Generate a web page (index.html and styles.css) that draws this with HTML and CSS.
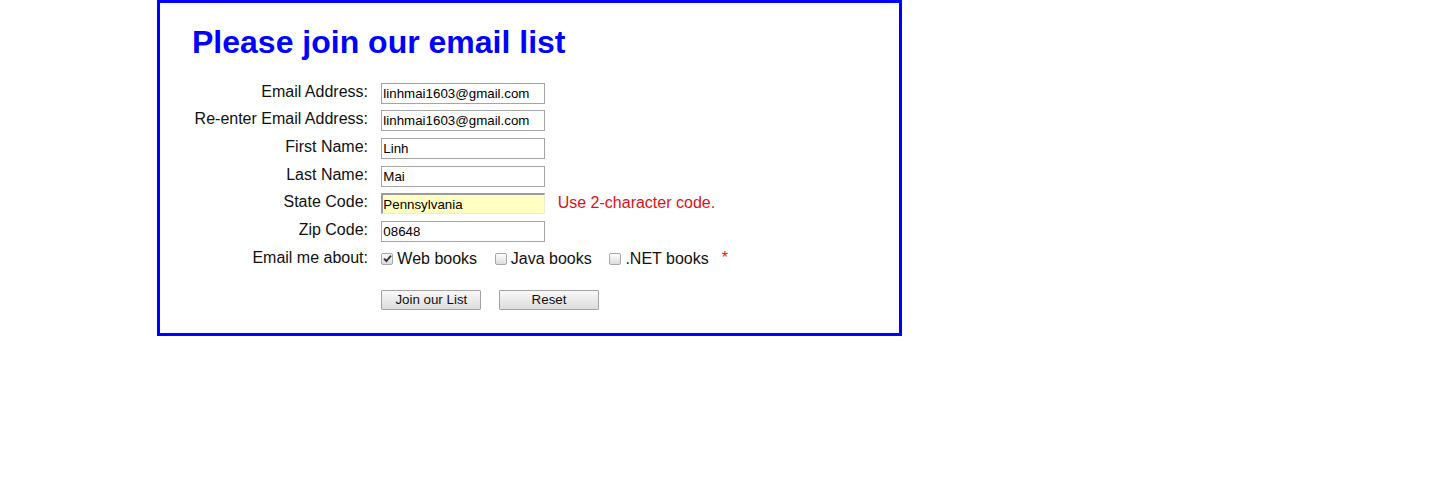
FILE: index.html
```html
<!DOCTYPE html>
<html>
<head>
<meta charset="utf-8">
<title>Email List</title>
<link rel="stylesheet" href="styles.css">
</head>
<body>
<main class="box">
  <h1 class="title">Please join our email list</h1>
  <form class="form">
    <div class="row"><label class="lbl">Email Address:</label><input class="field" type="text" value="linhmai1603@gmail.com"></div>
    <div class="row"><label class="lbl">Re-enter Email Address:</label><input class="field" type="text" value="linhmai1603@gmail.com"></div>
    <div class="row"><label class="lbl">First Name:</label><input class="field" type="text" value="Linh"></div>
    <div class="row"><label class="lbl">Last Name:</label><input class="field" type="text" value="Mai"></div>
    <div class="row"><label class="lbl">State Code:</label><input class="field field-auto" type="text" value="Pennsylvania"><span class="err">Use 2-character code.</span></div>
    <div class="row"><label class="lbl">Zip Code:</label><input class="field" type="text" value="08648"></div>
    <div class="row row-checks">
      <label class="lbl">Email me about:</label>
      <span class="check-item">
        <span class="cb cb-on"><svg width="9" height="9" viewBox="0 0 9 9"><path d="M1 4.6 L3.4 7 L8 1.6" fill="none" stroke="#333" stroke-width="1.9"/></svg></span><span class="ctext">Web books</span>
      </span>
      <span class="check-item">
        <span class="cb"></span><span class="ctext">Java books</span>
      </span>
      <span class="check-item">
        <span class="cb"></span><span class="ctext">.NET books</span>
      </span>
      <span class="star">*</span>
    </div>
    <div class="row row-buttons">
      <button class="btn" type="button">Join our List</button>
      <button class="btn" type="button">Reset</button>
    </div>
  </form>
</main>
</body>
</html>
```
FILE: styles.css
```css
html, body {
  margin: 0;
  padding: 0;
  background: #fff;
}
body {
  font-family: "Liberation Sans", Arial, sans-serif;
  font-size: 16px;
  color: #111;
}
.box {
  box-sizing: border-box;
  width: 745px;
  margin-left: 157px;
  border: 3px solid #0000ff;
  padding: 0 32px 17px 32px;
}
.title {
  color: #0000ff;
  font-size: 32px;
  font-weight: bold;
  line-height: 36.8px;
  margin: 21.44px 0 21.44px 0;
}
.form {
  display: flex;
  flex-direction: column;
}
.row {
  display: flex;
  align-items: flex-start;
  height: 27.67px;
}
.lbl {
  width: 176px;
  flex: none;
  text-align: right;
  line-height: 18.4px;
}
.field {
  box-sizing: border-box;
  width: 164px;
  height: 21px;
  margin: 0 0 0 13.33px;
  padding: 1px 2px 1px 1px;
  border: 1px solid #a5a5a5;
  font-family: "Liberation Sans", Arial, sans-serif;
  font-size: 13.33px;
  color: #000;
  background: #fff;
  outline: none;
}
.field-auto {
  background: #ffffc4;
  border-top: 2px solid #9a9a9a;
  border-left: 2px solid #9a9a9a;
  border-right: 1px solid #ecefd0;
  border-bottom: 1px solid #ecefd0;
  padding: 1px 2px 1px 0;
}
.err {
  color: #e0111b;
  margin-left: 12.4px;
  line-height: 18.4px;
  margin-top: 1px;
}
.row-checks {
  height: 41px;
}
.check-item {
  display: flex;
  align-items: flex-start;
  margin-left: 13.33px;
}
.check-item + .check-item {
  margin-left: 17.7px;
}
.cb {
  box-sizing: border-box;
  width: 12px;
  height: 12px;
  margin-top: 4px;
  margin-right: 4px;
  border: 1px solid #a8a8a8;
  border-radius: 2px;
  background: linear-gradient(#fdfdfd, #dcdcdc);
  display: flex;
  align-items: center;
  justify-content: center;
}
.cb svg {
  display: block;
}
.ctext {
  line-height: 18.4px;
  margin-top: 1px;
}
.star {
  color: #e0111b;
  margin-left: 13px;
  line-height: 18.4px;
}
.row-buttons {
  padding-left: 176px;
  height: 26.67px;
}
.btn {
  box-sizing: border-box;
  width: 100px;
  height: 20px;
  margin-left: 13.33px;
  padding: 0;
  border: 1px solid #a3a3a3;
  border-radius: 1px;
  background: linear-gradient(#f8f8f8, #dddddd);
  font-family: "Liberation Sans", Arial, sans-serif;
  font-size: 13.33px;
  color: #111;
}
.btn + .btn {
  margin-left: 17.7px;
}
```
